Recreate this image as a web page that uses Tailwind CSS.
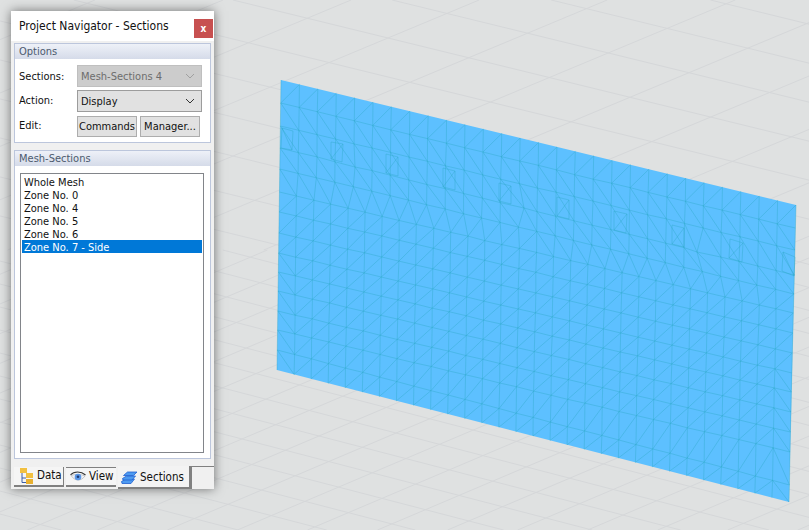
<!DOCTYPE html>
<html lang="en">
<head>
    <meta charset="UTF-8">
    <title>Project Navigator - Sections</title>
    <script src="https://cdn.jsdelivr.net/npm/@tailwindcss/browser@4"></script>
</head>
<body class="bg-[#dfe1e1] overflow-hidden">
<div class="relative w-[809px] h-[530px] overflow-hidden font-['DejaVu_Sans_Condensed','Roboto',sans-serif] text-[11px] text-[#111]">
    <!-- 3D view: floor grid and surface mesh, filled in by the script below -->
    <svg id="scene" class="absolute inset-0" width="809" height="530" viewBox="0 0 809 530">
        <g id="floor" stroke="#d5d7d9" stroke-width="1" fill="none"></g>
        <polygon points="281,80 796,205 789,502 277,370" fill="#5dc0ff"/>
        <g id="mesh" stroke="#2aa8c4" stroke-opacity="0.5" stroke-width="0.75" fill="none"></g>
    </svg>

    <!-- Navigator window -->
    <div class="absolute left-[11px] top-[11px] w-[203px] h-[478px] flex flex-col bg-[#f0f0f0] shadow-[0_0_10px_rgba(0,0,0,0.5)]">
        <div class="h-[30px] shrink-0 bg-white flex items-center justify-between pl-2 pr-px">
            <span class="text-[12px] leading-none">Project Navigator - Sections</span>
            <button class="w-[19px] h-[19px] mt-[5px] bg-[#c75050] text-white font-bold text-[10px] leading-none">x</button>
        </div>
        <div class="flex flex-col px-[3px] pt-[2px]">
            <!-- Options -->
            <section class="h-[100px] flex flex-col border border-[#bcc6dc] bg-white">
                <h2 class="h-[15px] shrink-0 pl-1 leading-[16px] text-[#4c5a6e] bg-gradient-to-b from-[#eef1f8] to-[#d5dbe9]">Options</h2>
                <div class="flex flex-col gap-[3px] pt-[6px] pl-1">
                    <div class="flex items-center h-[22px]">
                        <span class="w-[58px] pt-[2px]">Sections:</span>
                        <div class="w-[125px] h-[22px] flex items-center justify-between pl-[3px] pr-[6px] bg-[#cccccc] border border-[#bfbfbf] text-[#6d6d6d]">
                            <span class="pt-[2px]">Mesh-Sections 4</span>
                            <svg width="10" height="6" viewBox="0 0 10 6" fill="none" stroke="#a0a0a0"><path d="M1 1l4 4 4-4"/></svg>
                        </div>
                    </div>
                    <div class="flex items-center h-[22px]">
                        <span class="w-[58px]">Action:</span>
                        <div class="w-[125px] h-[22px] flex items-center justify-between pl-[3px] pr-[6px] bg-[#e1e1e1] border border-[#9c9c9c]">
                            <span class="pt-[2px]">Display</span>
                            <svg width="10" height="6" viewBox="0 0 10 6" fill="none" stroke="#333"><path d="M1 1l4 4 4-4"/></svg>
                        </div>
                    </div>
                    <div class="flex items-center h-[22px]">
                        <span class="w-[58px]">Edit:</span>
                        <button class="w-[60px] h-[21px] bg-[#e1e1e1] border border-[#adadad] leading-none">Commands</button>
                        <button class="w-[60px] h-[21px] ml-[3px] bg-[#e1e1e1] border border-[#adadad] leading-none">Manager...</button>
                    </div>
                </div>
            </section>
            <!-- Mesh-Sections -->
            <section class="h-[309px] mt-[7px] flex flex-col border border-[#bcc6dc] bg-white">
                <h2 class="h-[15px] shrink-0 pl-1 leading-[16px] text-[#4c5a6e] bg-gradient-to-b from-[#eef1f8] to-[#d5dbe9]">Mesh-Sections</h2>
                <ul class="ml-[5px] mr-[6px] mt-[7px] h-[280px] p-px border border-[#82858a] leading-[15px]">
                    <li class="h-[13px] pl-[2px]">Whole Mesh</li>
                    <li class="h-[13px] pl-[2px]">Zone No. 0</li>
                    <li class="h-[13px] pl-[2px]">Zone No. 4</li>
                    <li class="h-[13px] pl-[2px]">Zone No. 5</li>
                    <li class="h-[13px] pl-[2px]">Zone No. 6</li>
                    <li class="h-[13px] pl-[2px] bg-[#0078d7] text-white">Zone No. 7 - Side</li>
                </ul>
            </section>
        </div>
        <!-- Tabs -->
        <div class="flex items-start mt-[7px] pl-[3px] h-[23px]">
            <div class="w-[50px] h-[20px] mt-px flex items-center gap-[4px] pl-[6px] border-r border-b-2 border-[#808080] bg-[#f5f5f5]">
                <svg width="13" height="16" viewBox="0 0 13 16" class="shrink-0">
                    <path d="M2 5v9.500h4M2 10h4" stroke="#3c5fa8" fill="none"/>
                    <rect x="0" y="0" width="7" height="5" fill="#f2c040"/>
                    <rect x="6" y="5" width="7" height="5" fill="#f2c040"/>
                    <rect x="6" y="11" width="7" height="5" fill="#e8b030"/>
                </svg>
                <span class="text-[11.5px]">Data</span>
            </div>
            <div class="w-[50px] h-[20px] mt-px ml-[2px] flex items-center gap-[3px] pl-[4px] border-t border-b-2 border-[#808080] bg-[#f5f5f5]">
                <svg width="16" height="11" viewBox="0 0 16 11" class="shrink-0">
                    <path d="M0.500 4C4 0 11 0 15.500 4" stroke="#333" stroke-width="1.100" fill="none"/>
                    <path d="M1 4.500C5 10.500 11 10.500 15 5C11 3 5 3 1 4.500z" fill="#f0f1f6" stroke="#9a9a9a" stroke-width="0.500"/>
                    <circle cx="8" cy="6" r="3.300" fill="#5b97e6"/>
                    <circle cx="8" cy="5.800" r="1.300" fill="#1d3a70"/>
                </svg>
                <span class="text-[11.5px]">View</span>
            </div>
            <div class="w-[73px] h-[23px] ml-[2px] flex items-center gap-[2px] pl-[3px] pt-[2px] border-r-2 border-b-2 border-[#808080] bg-[#f3f3f3]">
                <svg width="17" height="13" viewBox="0 0 17 13" class="shrink-0" fill="#4d9af0" stroke="#1f5fd0" stroke-width="0.800">
                    <path d="M0.500 10.500l4-2.500h9l-3.500 4.500h-9z"/>
                    <path d="M1.500 7.500l4-2.500h9l-3.500 4h-9z"/>
                    <path d="M2.500 4.500l4-3.500h9.500l-3.500 3.500h-10z"/>
                </svg>
                <span class="text-[11.5px]">Sections</span>
            </div>
            <div class="flex-1 h-[23px] border-t border-l border-[#808080]"></div>
        </div>
    </div>
</div>

<script>
    const NS = "http://www.w3.org/2000/svg";
    function addLine(group, x1, y1, x2, y2) {
        const l = document.createElementNS(NS, "line");
        l.setAttribute("x1", x1); l.setAttribute("y1", y1);
        l.setAttribute("x2", x2); l.setAttribute("y2", y2);
        group.appendChild(l);
    }

    // Floor grid: wider cells on the upper part of the view, tighter on the lower part
    const floor = document.getElementById("floor");
    function clipY(x1, y1, x2, y2, top, bottom) {
        const t = v => (v - y1) / (y2 - y1);
        let a = [x1, y1], b = [x2, y2];
        if (a[1] < top) a = [x1 + (x2 - x1) * t(top), top];
        if (a[1] > bottom) a = [x1 + (x2 - x1) * t(bottom), bottom];
        if (b[1] < top) b = [x1 + (x2 - x1) * t(top), top];
        if (b[1] > bottom) b = [x1 + (x2 - x1) * t(bottom), bottom];
        if (a[1] !== b[1]) addLine(floor, a[0], a[1], b[0], b[1]);
    }
    function grid(px, py, slopeA, stepA, slopeB, stepB, top, bottom) {
        for (let k = -40; k <= 40; k++) {
            const ca = py - slopeA * px + k * stepA;
            clipY(0, ca, 809, ca + slopeA * 809, top, bottom);
            const cb = py - slopeB * px + k * stepB;
            clipY(0, cb, 809, cb + slopeB * 809, top, bottom);
        }
    }
    grid(388, 38, 0.245, 39, -0.417, 53.4, 0, 250);
    grid(319, 436, 0.26, 23, -0.424, 29.7, 250, 530);

    // Surface mesh
    const mesh = document.getElementById("mesh");
    const leftY = [80, 103, 126, 148, 169, 192, 212, 233, 253, 272, 291, 311, 330, 350, 370];
    const rightY = [205, 228, 250, 275, 294, 313, 333, 353, 373, 392, 412, 432, 452, 485, 502];
    const rows = leftY.map((ly, r) => {
        const v = (ly - 80) / 290;
        const x0 = 281 - 4 * v, x1 = 796 - 7 * v;
        const n = r < 5 ? 28 : 30;
        const pts = [];
        for (let c = 0; c <= n; c++) {
            const u = c / n;
            let jx = 0, jy = 0;
            if (r > 0 && r < 14 && c > 0 && c < n) {
                jx = (Math.abs(Math.sin(r * 12.9 + c * 78.2) * 437) % 1 - 0.5) * 0.5;
                jy = (Math.abs(Math.sin(r * 39.3 + c * 11.7) * 951) % 1 - 0.5) * 0.5;
            }
            pts.push({ u, x: x0 + (x1 - x0) * u + jx, y: ly + (rightY[r] - ly) * u + jy });
        }
        return pts;
    });
    // Irregular nodes where the triangles fan out
    [[355, 167], [524, 208], [697, 252]].forEach(([x, y]) => {
        let best = null, dist = Infinity;
        rows.forEach(row => row.forEach(p => {
            const d = (p.x - x) ** 2 + (p.y - y) ** 2;
            if (d < dist) { dist = d; best = p; }
        }));
        best.x = x; best.y = y;
    });
    const edge = (a, b) => addLine(mesh, a.x, a.y, b.x, b.y);
    rows.forEach((row, r) => {
        for (let c = 0; c + 1 < row.length; c++) {
            if (r > 0 && r < 14) edge(row[c], row[c + 1]);
        }
        if (r === 14) return;
        const next = rows[r + 1];
        if (next.length === row.length) {
            for (let c = 0; c < row.length; c++) {
                edge(row[c], next[c]);
                if (c + 1 === row.length) break;
                // upper rows and the outer columns lean the other way
                const back = (r >= 1 && r <= 3) || (r >= 8 && (c === 0 || c + 2 === row.length));
                if (back) edge(row[c], next[c + 1]);
                else edge(next[c], row[c + 1]);
            }
        } else {
            // row with fewer points above one with more: walk both sides
            let i = 0, j = 0;
            edge(row[0], next[0]);
            while (i + 1 < row.length || j + 1 < next.length) {
                if (j + 1 >= next.length || (i + 1 < row.length && row[i + 1].u <= next[j + 1].u)) i++;
                else j++;
                edge(row[i], next[j]);
            }
        }
    });

    // Window openings: top-left, top-right, bottom-right, bottom-left, and which way the diagonal runs
    const openings = [
        [282, 128, 293, 131, 292, 150, 281, 148, 1],
        [331, 142, 343, 144, 342, 162, 331, 159, 0],
        [386, 154, 398, 157, 398, 176, 386, 173, 0],
        [443, 168, 455, 171, 455, 190, 443, 187, 0],
        [499, 183, 511, 186, 511, 204, 499, 201, 0],
        [557, 197, 569, 200, 569, 219, 557, 216, 0],
        [614, 211, 627, 214, 626, 233, 614, 230, 0],
        [672, 225, 684, 228, 684, 247, 672, 244, 0],
        [730, 239, 743, 243, 742, 262, 729, 258, 0],
        [783, 252, 795, 257, 794, 276, 782, 271, 1],
    ];
    openings.forEach(o => {
        addLine(mesh, o[0], o[1], o[2], o[3]);
        addLine(mesh, o[2], o[3], o[4], o[5]);
        addLine(mesh, o[4], o[5], o[6], o[7]);
        addLine(mesh, o[6], o[7], o[0], o[1]);
        if (o[8]) addLine(mesh, o[0], o[1], o[4], o[5]);
        else addLine(mesh, o[6], o[7], o[2], o[3]);
    });
</script>
</body>
</html>
